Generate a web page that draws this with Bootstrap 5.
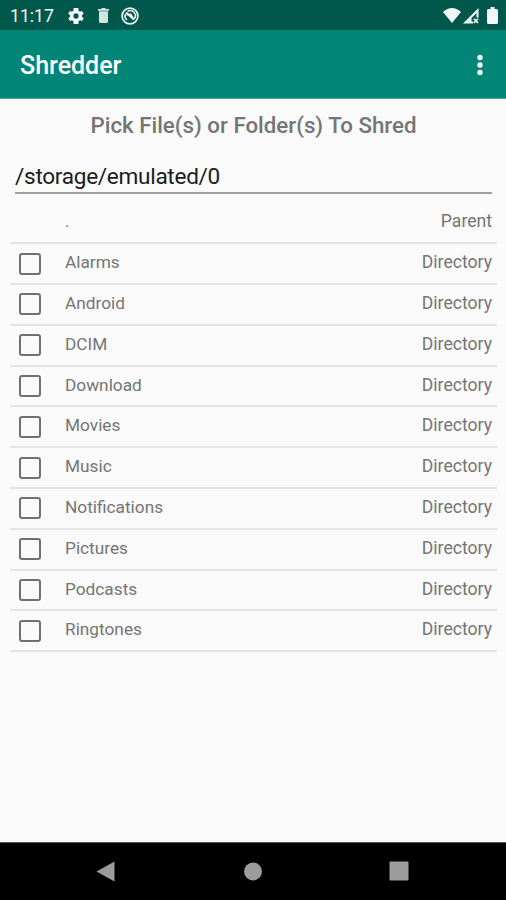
<!DOCTYPE html>
<html lang="en">
<head>
<meta charset="utf-8">
<meta name="viewport" content="width=device-width, initial-scale=1">
<title>Shredder</title>
<link href="https://cdn.jsdelivr.net/npm/bootstrap@5.3.0/dist/css/bootstrap.min.css" rel="stylesheet">
<style>
body{font-family:Roboto,sans-serif;background:#fafafa;color:#757575;height:900px;overflow:hidden}
svg{display:block;flex:none}
.status-bar{height:30px;background:#00574b;padding:1px 8px 0 10px;color:#f2f8f7}
.clock{font-size:17.6px;line-height:28px;width:58px;white-space:nowrap}
.trash{margin-left:14px}
.sync{margin-left:12px}
.signal{margin-left:2px}
.app-bar{height:69px;background:#008577;padding:1px 18px 0 20px;border-bottom:1px solid #4aa59b}
.app-title{font-size:25px;font-weight:500;line-height:30px;padding-top:3px}
.heading{font-size:22.3px;font-weight:500;line-height:28px;padding:11.500px 0 0 1px;white-space:nowrap}
.path-field{margin:23px 14px 0 15px;height:32px;padding-top:1px;border-bottom:2px solid #a0a0a0;color:#1c1c1c;font-size:22.6px;letter-spacing:-.3px;line-height:28px}
.file-list{margin:10px 9px 0 10px}
.file-row{height:40.8px;padding:0 5px 0 9px;border-bottom:2px solid #e4e4e4;font-size:17.25px;line-height:20px}
.box-cell{width:46px}
.check{display:block;width:22px;height:22px;border:2px solid #707070;border-radius:3px}
.label{padding-bottom:3px}
.kind{font-size:17.6px}
.nav-keys{height:58px;background:#000;padding:0 97px 1px 96px;border-top:1px solid #555}
</style>
<script src="https://cdn.jsdelivr.net/npm/bootstrap@5.3.0/dist/js/bootstrap.bundle.min.js"></script>
</head>
<body class="d-flex flex-column m-0">
<div class="status-bar d-flex align-items-center flex-shrink-0">
  <span class="clock">11:17</span>
  <svg width="16" height="16" viewBox="2 2 20 20" fill="currentColor"><path fill-rule="evenodd" d="M19.4 13a7.500 7.500 0 0 0 0-2l2.200-1.700-2-3.500-2.600 1a8 8 0 0 0-1.700-1L14.900 2H9l-.4 3.800a8 8 0 0 0-1.700 1l-2.600-1-2 3.500L4.600 11a7.500 7.500 0 0 0 0 2l-2.200 1.700 2 3.500 2.600-1a8 8 0 0 0 1.700 1L9 22h6l.4-3.800a8 8 0 0 0 1.700-1l2.600 1 2-3.500zM12 15.300a3.300 3.300 0 1 1 0-6.600 3.300 3.300 0 0 1 0 6.600z"/></svg>
  <svg class="trash" width="11" height="15" viewBox="0 0 11 15" fill="#d5e3e1"><path d="M0 1h3l1-1h3l1 1h3v1.700H0zM1 3.200h9V13.500A1.500 1.500 0 0 1 8.500 15h-6A1.500 1.500 0 0 1 1 13.500z"/></svg>
  <svg class="sync" width="18" height="18" viewBox="0 0 18 18" fill="none" stroke="currentColor"><circle cx="9" cy="9" r="7.900" stroke-width="1.700"/><path d="M6 13a5 5 0 0 1-1.300-6.200M6.500 4.500A5 5 0 0 1 13 12" stroke-width="1.500"/><path d="M5 5.500l8 7M5.500 7.500h4l2 3" stroke-width="2"/></svg>
  <div class="d-flex align-items-center ms-auto">
    <svg width="18" height="15" viewBox="0 0 19 15" preserveAspectRatio="none" fill="currentColor"><path d="M9.500 15L0 4Q9.500-3.800 19 4z"/></svg>
    <svg class="signal" width="16" height="16" viewBox="0 0 16 16" fill="currentColor"><path fill-rule="evenodd" d="M0 15.500L15.500 0V9.500H13.500V5L8.500 10V13.500H10V15.500z"/><path d="M10.800 10.800l4.200 4.200m0-4.200l-4.200 4.200" stroke="currentColor" stroke-width="1.600"/></svg>
    <svg class="ms-2" width="11" height="17" viewBox="0 0 11 17" fill="currentColor"><path d="M3.500 0h4v2H9.500Q11 2 11 3.500v12Q11 17 9.500 17h-8Q0 17 0 15.500v-12Q0 2 1.500 2h2z"/></svg>
  </div>
</div>
<header class="app-bar d-flex align-items-center justify-content-between flex-shrink-0 text-white">
  <span class="app-title">Shredder</span>
  <svg width="16" height="22" viewBox="0 0 16 22" fill="currentColor"><circle cx="8" cy="3.500" r="2.700"/><circle cx="8" cy="11" r="2.700"/><circle cx="8" cy="18.500" r="2.700"/></svg>
</header>
<main class="flex-grow-1">
  <div class="heading text-center">Pick File(s) or Folder(s) To Shred</div>
  <div class="path-field">/storage/emulated/0</div>
  <div class="file-list">
    <div class="file-row d-flex align-items-center"><span class="box-cell"></span><span class="label">.</span><span class="label kind ms-auto">Parent</span></div>
    <div class="file-row d-flex align-items-center"><span class="box-cell"><i class="check"></i></span><span class="label">Alarms</span><span class="label kind ms-auto">Directory</span></div>
    <div class="file-row d-flex align-items-center"><span class="box-cell"><i class="check"></i></span><span class="label">Android</span><span class="label kind ms-auto">Directory</span></div>
    <div class="file-row d-flex align-items-center"><span class="box-cell"><i class="check"></i></span><span class="label">DCIM</span><span class="label kind ms-auto">Directory</span></div>
    <div class="file-row d-flex align-items-center"><span class="box-cell"><i class="check"></i></span><span class="label">Download</span><span class="label kind ms-auto">Directory</span></div>
    <div class="file-row d-flex align-items-center"><span class="box-cell"><i class="check"></i></span><span class="label">Movies</span><span class="label kind ms-auto">Directory</span></div>
    <div class="file-row d-flex align-items-center"><span class="box-cell"><i class="check"></i></span><span class="label">Music</span><span class="label kind ms-auto">Directory</span></div>
    <div class="file-row d-flex align-items-center"><span class="box-cell"><i class="check"></i></span><span class="label">Notifications</span><span class="label kind ms-auto">Directory</span></div>
    <div class="file-row d-flex align-items-center"><span class="box-cell"><i class="check"></i></span><span class="label">Pictures</span><span class="label kind ms-auto">Directory</span></div>
    <div class="file-row d-flex align-items-center"><span class="box-cell"><i class="check"></i></span><span class="label">Podcasts</span><span class="label kind ms-auto">Directory</span></div>
    <div class="file-row d-flex align-items-center"><span class="box-cell"><i class="check"></i></span><span class="label">Ringtones</span><span class="label kind ms-auto">Directory</span></div>
  </div>
</main>
<footer class="nav-keys d-flex align-items-center justify-content-between flex-shrink-0">
  <svg width="19" height="21" viewBox="0 0 19 21" fill="#9c9c9c"><path d="M18.500 .5v20L.5 10.500z"/></svg>
  <svg width="19" height="19" viewBox="0 0 19 19" fill="#9c9c9c"><circle cx="10" cy="9.500" r="9"/></svg>
  <svg width="20" height="20" viewBox="0 0 20 20" fill="#9c9c9c"><rect x=".5" y=".5" width="19" height="19" rx="1"/></svg>
</footer>
</body>
</html>
